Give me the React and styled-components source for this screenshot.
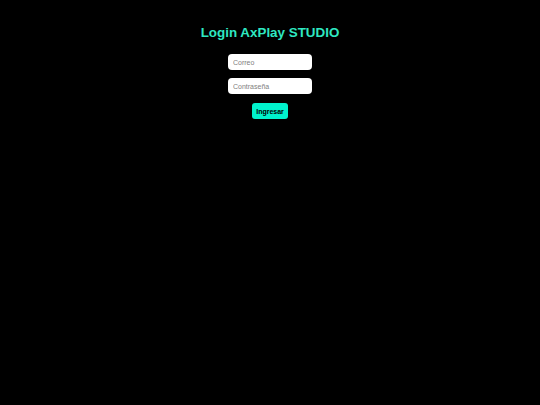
import React from "react";
import styled, { createGlobalStyle } from "styled-components";

const Global = createGlobalStyle`
  html, body { margin: 0; padding: 0; background: #000; }
  body { font-family: "Liberation Sans", Arial, sans-serif; }
`;

const Page = styled.div`
  min-height: 405px;
  background: #000;
  display: flex;
  flex-direction: column;
  align-items: center;
  padding-top: 24px;
  box-sizing: border-box;
`;

const Title = styled.h1`
  margin: 0 0 13px;
  font-size: 13.4px;
  font-weight: 700;
  line-height: 17px;
  color: #2ee8c2;
`;

const Form = styled.form`
  display: flex;
  flex-direction: column;
  align-items: center;
  gap: 8px;
`;

const Input = styled.input`
  width: 84px;
  height: 16px;
  box-sizing: border-box;
  border: none;
  border-radius: 4px;
  background: #fff;
  padding: 0 5px;
  font-family: "Liberation Sans", Arial, sans-serif;
  font-size: 7px;
  color: #000;
  outline: none;
  &::placeholder { color: #808080; }
`;

const Button = styled.button`
  margin-top: 1px;
  width: 36px;
  height: 16px;
  border: none;
  border-radius: 3px;
  background: #00f2cc;
  color: #000;
  font-family: "Liberation Sans", Arial, sans-serif;
  font-size: 7px;
  font-weight: 700;
  padding: 0;
  cursor: pointer;
`;

export default function App() {
  return (
    <>
      <Global />
      <Page>
        <Title>Login AxPlay STUDIO</Title>
        <Form onSubmit={(e) => e.preventDefault()}>
          <Input type="email" placeholder="Correo" />
          <Input type="password" placeholder="Contraseña" />
          <Button type="submit">Ingresar</Button>
        </Form>
      </Page>
    </>
  );
}
